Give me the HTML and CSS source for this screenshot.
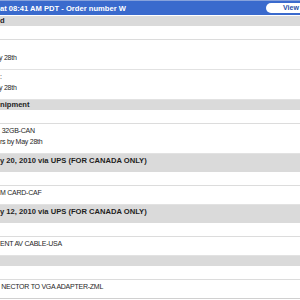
FILE: index.html
```html
<!DOCTYPE html>
<html lang="en">
<head>
    <meta charset="UTF-8">
    <meta name="viewport" content="width=device-width, initial-scale=1.0">
    <title>Order Status</title>
    <link rel="stylesheet" href="styles.css">
</head>
<body>
    <div class="page">
        <div class="topbar">
            <span class="title">at 08:41 AM PDT - Order number W</span>
            <span class="view-btn">View o</span>
        </div>
        <div class="gap"></div>

        <div class="section-bar">d</div>
        <div class="blank-row"></div>
        <div class="item">
            <div class="line"></div>
            <div class="line cut">y 28th</div>
        </div>
        <div class="item">
            <div class="line">:</div>
            <div class="line cut">y 28th</div>
        </div>

        <div class="section-bar">nipment</div>
        <div class="blank-row"></div>
        <div class="item">
            <div class="line">&nbsp;32GB-CAN</div>
            <div class="line">rs by May 28th</div>
        </div>

        <div class="date-bar">y 20, 2010 via UPS (FOR CANADA ONLY)</div>
        <div class="blank-row"></div>
        <div class="item">
            <div class="line">M CARD-CAF</div>
        </div>

        <div class="date-bar">y 12, 2010 via UPS (FOR CANADA ONLY)</div>
        <div class="blank-row"></div>
        <div class="item">
            <div class="line">ENT AV CABLE-USA</div>
        </div>

        <div class="section-bar"></div>
        <div class="blank-row"></div>
        <div class="item">
            <div class="line">&thinsp;NECTOR TO VGA ADAPTER-ZML</div>
        </div>
    </div>
</body>
</html>
```

FILE: styles.css
```css
body {
    margin: 0;
    background: #fff;
    font-family: "Liberation Sans", Arial, sans-serif;
    overflow: hidden;
}
.page {
    width: 300px;
    height: 300px;
    overflow: hidden;
}
.topbar {
    display: flex;
    align-items: center;
    height: 14px;
    border-top: 1px solid #87a2dc;
    background: #3a6acd;
    overflow: hidden;
}
.title {
    flex: 1;
    color: #fff;
    font-size: 7.6px;
    font-weight: bold;
    white-space: nowrap;
}
.view-btn {
    flex-shrink: 0;
    width: 20px;
    height: 10px;
    margin-right: -3px;
    padding-left: 17px;
    background: #fff;
    border-radius: 5px 0 0 5px;
    color: #1e4ea6;
    font-size: 7px;
    font-weight: bold;
    line-height: 10px;
    white-space: nowrap;
}
.gap {
    height: 1px;
}
.section-bar {
    height: 10px;
    background: #dadada;
    color: #1e1e1e;
    font-size: 7.6px;
    font-weight: bold;
    line-height: 10px;
    white-space: nowrap;
}
.date-bar {
    height: 18px;
    background: #dadada;
    color: #1e1e1e;
    font-size: 7.6px;
    font-weight: bold;
    line-height: 14px;
    white-space: nowrap;
}
.blank-row {
    height: 13px;
    border-bottom: 1px solid #dcdcdc;
}
.item {
    padding: 1px 0 6px;
    border-bottom: 1px solid #e2e2e2;
    color: #262626;
    font-size: 7px;
    letter-spacing: -0.25px;
}
.item:last-child {
    border-bottom-color: #d0d0d0;
}
.line {
    height: 11px;
    line-height: 11px;
    white-space: nowrap;
}
.cut {
    text-indent: -1px;
}
```
